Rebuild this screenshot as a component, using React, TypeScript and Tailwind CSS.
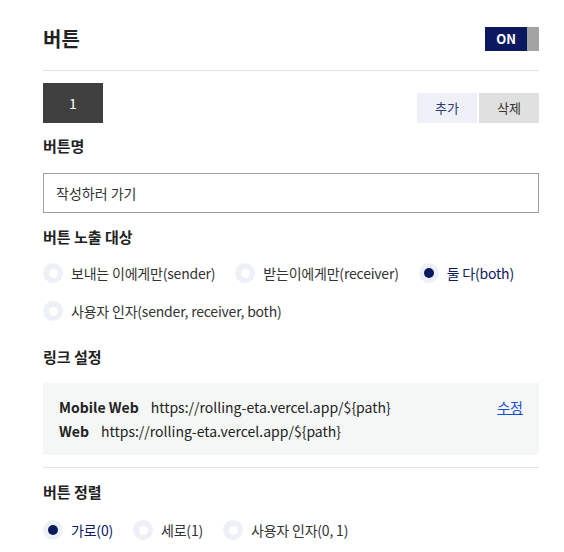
import { useState } from 'react';

const NAVY = 'text-[#0b1a5e]';

function Radio({ label, checked, onClick }: { label: string; checked: boolean; onClick: () => void }) {
  return (
    <button type="button" onClick={onClick} className="flex h-5 items-center gap-2">
      <span className="flex h-5 w-5 items-center justify-center rounded-full bg-[#eef0f7]">
        {checked ? (
          <span className="h-[10px] w-[10px] rounded-full bg-[#0b1a5e]" />
        ) : (
          <span className="h-[9px] w-[9px] rounded-full bg-white" />
        )}
      </span>
      <span className={`text-[14px] leading-5 tracking-[-0.2px] ${checked ? NAVY : 'text-[#333]'}`}>{label}</span>
    </button>
  );
}

export default function App() {
  const [target, setTarget] = useState(2);
  const [align, setAlign] = useState(0);
  const [name, setName] = useState('작성하러 가기');

  const targets = ['보내는 이에게만(sender)', '받는이에게만(receiver)', '둘 다(both)', '사용자 인자(sender, receiver, both)'];
  const aligns = ['가로(0)', '세로(1)', '사용자 인자(0, 1)'];

  return (
    <div className="h-[552px] w-[564px] overflow-hidden bg-white font-['Noto_Sans_CJK_KR','Noto_Sans',sans-serif] text-[#222]">
      <div className="ml-[43px] w-[496px] pt-[27px]">
        {/* header */}
        <div className="flex h-6 items-center justify-between border-b border-[#e2e2e2] pb-[19px] box-content">
          <h1 className="text-[20px] font-bold leading-6">버튼</h1>
          <div className="flex h-6">
            <span className="flex w-[42px] items-center justify-center bg-[#0b1a5e] text-[13px] font-bold text-white">ON</span>
            <span className="w-3 bg-[#a3a3a3]" />
          </div>
        </div>

        {/* tabs */}
        <div className="mt-3 flex items-end justify-between">
          <div className="flex h-10 w-[60px] items-center justify-center bg-[#3f3f3f] text-[14px] text-white">1</div>
          <div className="flex gap-[2px]">
            <button className="h-[30px] w-[60px] bg-[#eff0f8] text-[13px] text-[#2c3a6b]">추가</button>
            <button className="h-[30px] w-[60px] bg-[#e0e0e0] text-[13px] text-[#333]">삭제</button>
          </div>
        </div>

        <h2 className="mt-[11px] text-[15px] font-bold leading-6">버튼명</h2>
        <input
          value={name}
          onChange={(e) => setName(e.target.value)}
          className="mt-[15px] h-10 w-full border border-[#9e9e9e] px-3 text-[14px] text-[#333] outline-none"
        />

        <h2 className="mt-3 text-[15px] font-bold leading-6">버튼 노출 대상</h2>
        <div className="mt-[14px] flex flex-wrap gap-x-5 gap-y-[18px]">
          {targets.map((t, i) => (
            <Radio key={t} label={t} checked={target === i} onClick={() => setTarget(i)} />
          ))}
        </div>

        <h2 className="mt-6 text-[15px] font-bold leading-6">링크 설정</h2>
        <div className="mt-[14px] flex justify-between bg-[#f5f7f7] px-4 py-3 text-[14px] leading-6 text-[#222]">
          <div>
            <p>
              <span className="mr-3 font-semibold">Mobile Web</span>https://rolling-eta.vercel.app/${'{path}'}
            </p>
            <p>
              <span className="mr-3 font-semibold">Web</span>https://rolling-eta.vercel.app/${'{path}'}
            </p>
          </div>
          <a href="#" className="h-6 text-[#1d4ed8] underline">수정</a>
        </div>

        <div className="mt-3 h-px bg-[#e2e2e2]" />

        <h2 className="mt-3 text-[15px] font-bold leading-6">버튼 정렬</h2>
        <div className="mt-4 flex gap-5">
          {aligns.map((t, i) => (
            <Radio key={t} label={t} checked={align === i} onClick={() => setAlign(i)} />
          ))}
        </div>
      </div>
    </div>
  );
}
